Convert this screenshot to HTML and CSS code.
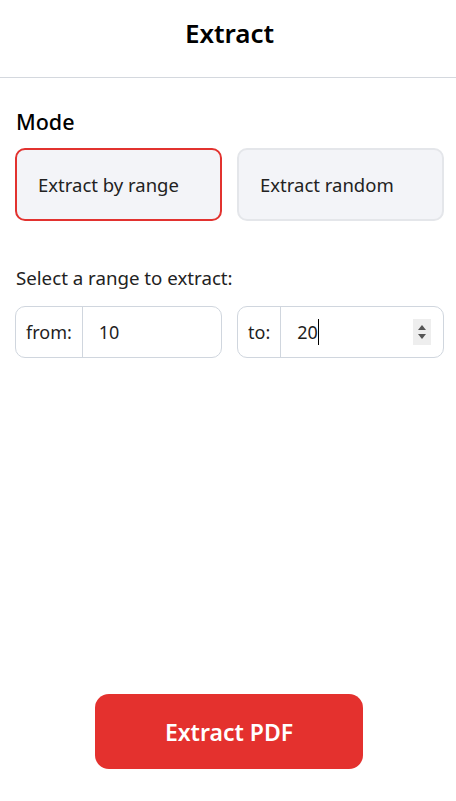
FILE: index.html
```html
<!DOCTYPE html>
<html lang="en">
<head>
<meta charset="utf-8">
<title>Extract</title>
<link rel="stylesheet" href="styles.css">
</head>
<body>
<div class="page">
  <header class="header"><h1 class="title">Extract</h1></header>
  <main class="content">
    <h2 class="section-label">Mode</h2>
    <div class="mode-grid">
      <button class="mode-btn active" type="button">Extract by range</button>
      <button class="mode-btn" type="button">Extract random</button>
    </div>
    <p class="range-label">Select a range to extract:</p>
    <div class="range-grid">
      <div class="field">
        <span class="addon">from:</span>
        <div class="value">10</div>
      </div>
      <div class="field">
        <span class="addon">to:</span>
        <div class="value"><span>20</span><span class="caret"></span>
          <span class="spinner">
            <svg width="18" height="26" viewBox="0 0 18 26"><path d="M5 11 L9 6 L13 11 Z" fill="#555"/><path d="M5 15 L9 20 L13 15 Z" fill="#555"/></svg>
          </span>
        </div>
      </div>
    </div>
  </main>
  <footer class="footer"><button class="primary" type="button">Extract PDF</button></footer>
</div>
</body>
</html>
```

FILE: styles.css
```css
* { box-sizing: border-box; }
html, body { margin: 0; padding: 0; height: 100%; }
body { font-family: "Noto Sans", "Open Sans", sans-serif; color: #1f1f1f; background: #fff; }
.page { display: flex; flex-direction: column; height: 801px; }
.header { height: 78px; border-bottom: 1px solid #d4d8de; display: flex; align-items: center; justify-content: center; }
.title { margin: 0; font-size: 26px; font-weight: 600; color: #000; line-height: 1; padding-bottom: 12px; padding-left: 3px; }
.content { padding: 31px 12px 0 15px; flex: 1; }
.section-label { margin: 0 0 14px 1px; font-size: 21.5px; font-weight: 500; color: #000; line-height: 25px; }
.mode-grid { display: grid; grid-template-columns: 1fr 1fr; gap: 15px; margin-top: 1px; }
.mode-btn { height: 73px; border-radius: 10px; background: #f3f4f8; border: 2px solid #e4e6ea; font-family: inherit; font-size: 18.5px; color: #222; text-align: left; padding: 0 0 0 21px; }
.mode-btn.active { border-color: #e2322f; }
.range-label { margin: 45px 0 16px 1px; font-size: 18.7px; line-height: 24px; color: #222; }
.range-grid { display: grid; grid-template-columns: 1fr 1fr; gap: 15px; }
.field { display: flex; height: 52px; border: 1px solid #d0d6de; border-radius: 10px; font-size: 18px; color: #1f1f1f; }
.addon { display: flex; align-items: center; padding: 0 10px 0 10px; border-right: 1px solid #d0d6de; }
.value { flex: 1; display: flex; align-items: center; padding-left: 16px; padding-right: 12px; }
.caret { display: inline-block; width: 1px; height: 26px; background: #000; margin-left: 0; }
.spinner { margin-left: auto; width: 18px; height: 26px; background: #eeeeee; display: flex; }
.footer { display: flex; justify-content: center; padding: 0 0 32px 2px; }
.primary { width: 268px; height: 75px; border: none; border-radius: 14px; background: #e4312e; color: #fff; font-family: inherit; font-size: 23px; font-weight: 600; }
```
